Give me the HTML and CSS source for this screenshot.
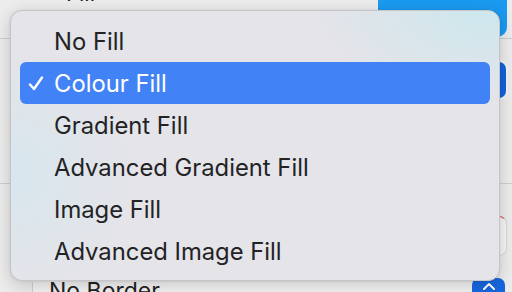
FILE: index.html
```html
<!DOCTYPE html>
<html lang="en">
<head>
<meta charset="UTF-8">
<meta name="viewport" content="width=device-width, initial-scale=1.0">
<title>Fill Menu</title>
<link rel="stylesheet" href="styles.css">
</head>
<body>

<div class="panel">
  <div class="row row-fill">
    <span class="label">Fill</span>
    <div class="blue-button"></div>
  </div>
  <div class="divider"></div>
  <div class="row row-popup">
    <div class="popup-button"></div>
  </div>
  <div class="divider divider-low"></div>
  <div class="row row-field">
    <div class="color-well"></div>
  </div>
  <div class="row row-border">
    <div class="border-field">
      <span class="border-label">No Border</span>
    </div>
    <div class="stepper">
      <svg width="14" height="8" viewBox="0 0 14 8"><path d="M2 7 L7 2 L12 7" fill="none" stroke="#fff" stroke-width="2" stroke-linecap="round" stroke-linejoin="round"/></svg>
    </div>
  </div>
</div>

<div class="menu">
  <div class="item">No Fill</div>
  <div class="item selected">
    <svg class="check" width="16" height="15" viewBox="0 0 16 15"><path d="M2 8.5 L6 13 L14 1.5" fill="none" stroke="#fff" stroke-width="2.4" stroke-linecap="round" stroke-linejoin="round"/></svg>
    Colour Fill
  </div>
  <div class="item">Gradient Fill</div>
  <div class="item">Advanced Gradient Fill</div>
  <div class="item">Image Fill</div>
  <div class="item">Advanced Image Fill</div>
</div>

</body>
</html>
```

FILE: styles.css
```css
body {
  margin: 0;
  width: 512px;
  height: 292px;
  overflow: hidden;
  position: relative;
  background-color: #ececec;
  font-family: Inter, "Noto Sans", sans-serif;
}

.panel {
  display: flex;
  flex-direction: column;
  height: 292px;
}

.row {
  display: flex;
  justify-content: space-between;
  align-items: flex-start;
}

.row-fill {
  height: 38px;
}

.label {
  margin: -20px 0 0 66px;
  font-size: 22px;
  color: #222;
}

.blue-button {
  width: 129px;
  height: 47px;
  margin: -10px 5px 0 0;
  background-color: #1a9af1;
  border-radius: 10px;
}

.divider {
  height: 1px;
  background-color: #cfcfcf;
}

.row-popup {
  justify-content: flex-end;
  height: 146px;
  padding-top: 24px;
  box-sizing: border-box;
}

.popup-button {
  width: 60px;
  height: 36px;
  margin-right: 6px;
  background-color: #1363d9;
  border-radius: 7px;
  box-shadow: 0 0 0 2px #f4f4f6;
}

.row-field {
  justify-content: flex-end;
  height: 95px;
  padding-top: 32px;
  box-sizing: border-box;
}

.color-well {
  width: 60px;
  height: 38px;
  margin-right: 5px;
  background-color: #f6f6f6;
  border: 1px solid #d8d8d8;
  border-top-color: #e05050;
  border-radius: 8px;
}

.row-border {
  align-items: flex-end;
  flex: 1;
}

.border-field {
  width: 440px;
  height: 10px;
  margin-left: 32px;
  background-color: #f2f2f2;
  border-left: 1px solid #d0d0d0;
  overflow: hidden;
}

.border-label {
  display: block;
  margin: -5px 0 0 16px;
  font-size: 23px;
  color: #222;
}

.stepper {
  width: 33px;
  height: 14px;
  margin-right: 7px;
  display: flex;
  justify-content: center;
  align-items: flex-end;
  padding-bottom: 2px;
  box-sizing: border-box;
  background-color: #1767e0;
  border-radius: 7px 7px 0 0;
}

.menu {
  position: absolute;
  left: 10px;
  top: 10px;
  width: 490px;
  height: 271px;
  box-sizing: border-box;
  padding: 9px 9px 8px;
  border-radius: 12px;
  border: 1px solid #c6c6ca;
  background-color: #e4e4e9;
  background-image:
    radial-gradient(ellipse 180px 90px at 100% 0%, rgba(200, 232, 238, 0.9), rgba(200, 232, 238, 0)),
    radial-gradient(ellipse 120px 120px at 0% 60%, rgba(210, 232, 240, 0.7), rgba(210, 232, 240, 0));
  box-shadow: 0 4px 16px rgba(0, 0, 0, 0.18), 0 0 2px rgba(0, 0, 0, 0.1);
}

.item {
  position: relative;
  height: 42px;
  display: flex;
  align-items: center;
  padding-left: 34px;
  font-size: 23.8px;
  color: #232325;
  border-radius: 6px;
}

.item.selected {
  background-color: #4282f7;
  color: #fff;
}

.check {
  position: absolute;
  left: 8px;
  top: 14px;
}
```
